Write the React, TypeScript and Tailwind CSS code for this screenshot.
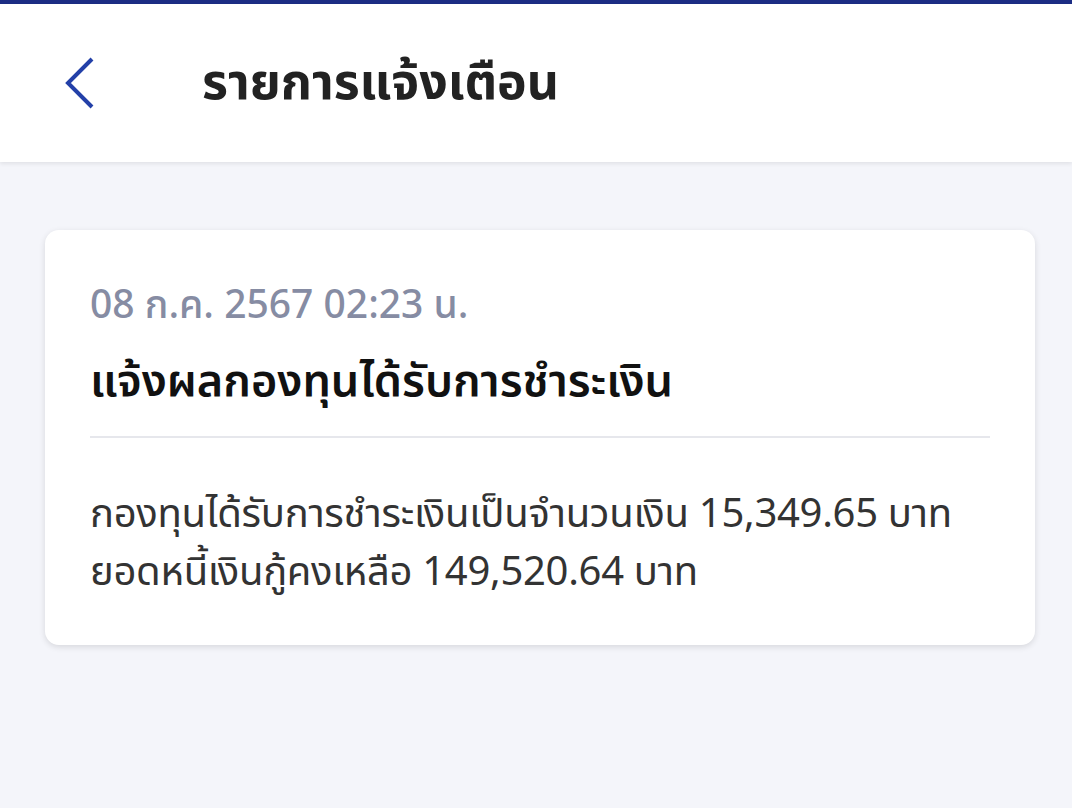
import React from "react";

export default function App() {
  const font = { fontFamily: '"Noto Sans Thai", "Noto Sans", "Liberation Sans", sans-serif' };
  return (
    <div className="w-[1072px] h-[808px] bg-[#f4f5fa] flex flex-col overflow-hidden" style={font}>
      <div className="h-[4px] bg-[#1c2d84]" />
      <div className="h-[158px] bg-white flex items-center shadow-[0_2px_4px_rgba(0,0,0,0.08)] relative z-10">
        <div className="w-[202px] flex items-center pl-[62px]">
          <svg width="36" height="54" viewBox="0 0 36 54" fill="none">
            <path d="M30 3 L6 27 L30 51" stroke="#2340a8" strokeWidth="4" strokeLinecap="butt" strokeLinejoin="miter" />
          </svg>
        </div>
        <div className="text-[50px] font-bold text-[#222222] leading-none pt-[2px]">รายการแจ้งเตือน</div>
      </div>
      <div className="pl-[45px] pr-[37px] pt-[68px]">
        <div className="bg-white rounded-[14px] shadow-[0_2px_6px_rgba(0,0,0,0.12)] px-[45px] pt-[53px] pb-[43px]">
          <div className="text-[39px] text-[#868ca3] font-medium leading-[48px]">08 ก.ค. 2567 02:23 น.</div>
          <div className="text-[45px] text-[#111111] font-semibold leading-[52px] mt-[25px]">แจ้งผลกองทุนได้รับการชำระเงิน</div>
          <div className="h-[2px] bg-[#e6e7ec] mt-[28px]" />
          <div className="text-[40px] text-[#333333] leading-[58px] mt-[48px] tracking-[-0.3px]">
            <div>กองทุนได้รับการชำระเงินเป็นจำนวนเงิน 15,349.65 บาท</div>
            <div>ยอดหนี้เงินกู้คงเหลือ 149,520.64 บาท</div>
          </div>
        </div>
      </div>
    </div>
  );
}
